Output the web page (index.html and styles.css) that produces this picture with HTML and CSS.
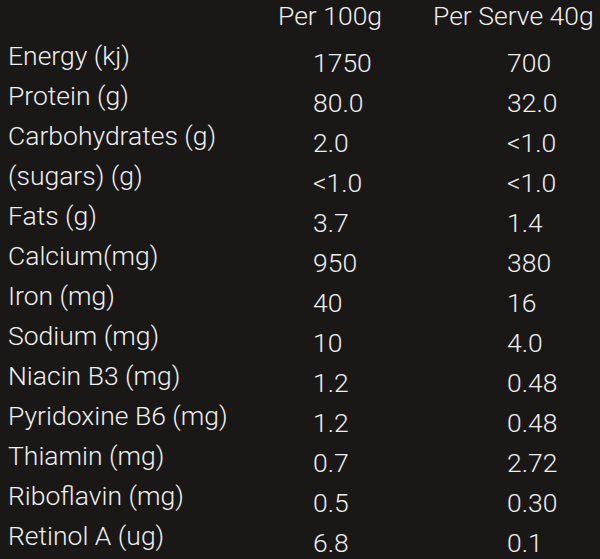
FILE: index.html
```html
<!DOCTYPE html>
<html>
<head>
<meta charset="utf-8">
<link rel="stylesheet" href="styles.css">
</head>
<body>
<div class="nutrition">
  <div class="head-row">
    <div class="cell label"></div>
    <div class="cell head">Per 100g</div>
    <div class="cell head">Per Serve 40g</div>
  </div>
  <div class="rows">
    <div class="cell label">Energy (kj)</div><div class="cell v1">1750</div><div class="cell v2">700</div>
    <div class="cell label">Protein (g)</div><div class="cell v1">80.0</div><div class="cell v2">32.0</div>
    <div class="cell label">Carbohydrates (g)</div><div class="cell v1">2.0</div><div class="cell v2">&lt;1.0</div>
    <div class="cell label">(sugars) (g)</div><div class="cell v1">&lt;1.0</div><div class="cell v2">&lt;1.0</div>
    <div class="cell label">Fats (g)</div><div class="cell v1">3.7</div><div class="cell v2">1.4</div>
    <div class="cell label">Calcium(mg)</div><div class="cell v1">950</div><div class="cell v2">380</div>
    <div class="cell label">Iron (mg)</div><div class="cell v1">40</div><div class="cell v2">16</div>
    <div class="cell label">Sodium (mg)</div><div class="cell v1">10</div><div class="cell v2">4.0</div>
    <div class="cell label">Niacin B3 (mg)</div><div class="cell v1">1.2</div><div class="cell v2">0.48</div>
    <div class="cell label">Pyridoxine B6 (mg)</div><div class="cell v1">1.2</div><div class="cell v2">0.48</div>
    <div class="cell label">Thiamin (mg)</div><div class="cell v1">0.7</div><div class="cell v2">2.72</div>
    <div class="cell label">Riboflavin (mg)</div><div class="cell v1">0.5</div><div class="cell v2">0.30</div>
    <div class="cell label">Retinol A (ug)</div><div class="cell v1">6.8</div><div class="cell v2">0.1</div>
  </div>
</div>
</body>
</html>
```
FILE: styles.css
```css
html, body {
  margin: 0;
  padding: 0;
  background: #1a1816;
}
body {
  width: 600px;
  height: 559px;
  overflow: hidden;
  color: #eeeeee;
  font-family: Roboto, "Liberation Sans", Arial, sans-serif;
  font-weight: 300;
  font-size: 26.5px;
}
.nutrition {
  padding-left: 8px;
}
.head-row,
.rows {
  display: grid;
  grid-template-columns: 270px 155px 1fr;
}
.head-row {
  line-height: 31px;
}
.rows {
  margin-top: 5px;
  grid-auto-rows: 40px;
  line-height: 40px;
}
.cell {
  white-space: nowrap;
}
.v1 {
  padding-left: 35px;
  padding-top: 7px;
}
.v2 {
  padding-left: 74px;
  padding-top: 7px;
}
```
